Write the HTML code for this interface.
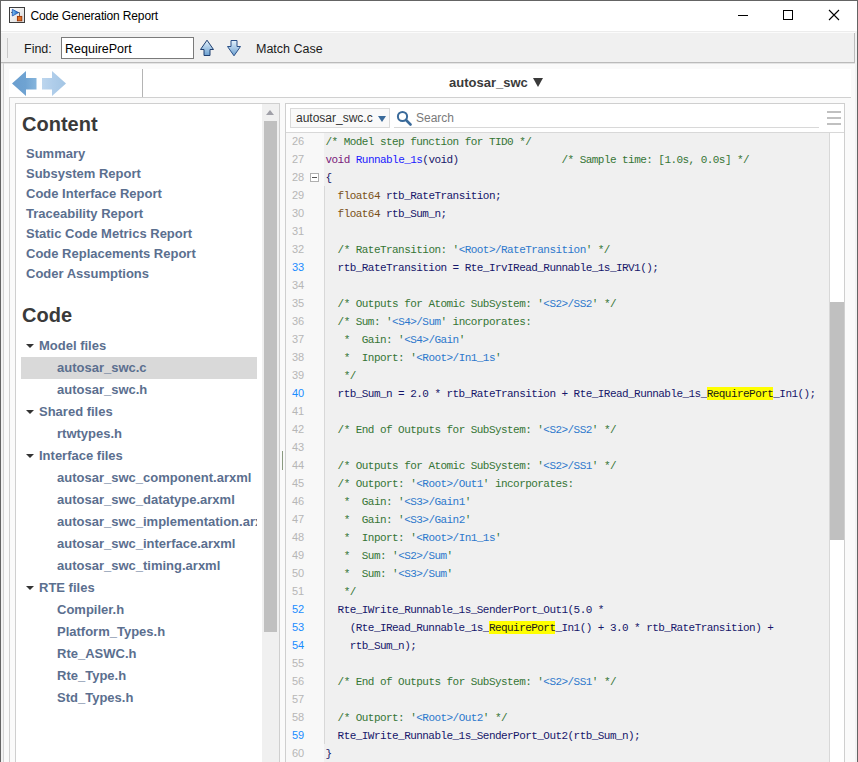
<!DOCTYPE html>
<html><head><meta charset="utf-8">
<style>
*{margin:0;padding:0;box-sizing:border-box}
html,body{width:858px;height:762px;overflow:hidden;background:#fff}
body{position:relative;font-family:"Liberation Sans",sans-serif}
.a{position:absolute}
.ttl{position:absolute;left:30.5px;top:9px;font-size:12px;letter-spacing:-0.15px;line-height:15px;color:#000;white-space:nowrap}
.tb{font-size:12.5px;line-height:15px;color:#1a1a1a;position:absolute;white-space:nowrap}
.nv{position:absolute;font-size:13px;font-weight:bold;line-height:16px;color:#5b6f8f;white-space:nowrap}
.tri{position:absolute;width:0;height:0;border-left:4px solid transparent;border-right:4px solid transparent;border-top:4px solid #333}
.ln{position:absolute;left:286px;width:37px;padding-left:6px;height:18px;line-height:18px;font-size:11px;color:#b6b6b6}
.ln.b{color:#1a8cff}
.cl{position:absolute;left:325.5px;height:18px;line-height:20px;padding-top:0px;font-family:"Liberation Mono",monospace;font-size:11px;letter-spacing:-0.55px;color:#16166a;white-space:pre;top:0}
.cl .c{color:#357535}
.cl .p{color:#2d78cc}
.cl .k{color:#7a1a7a}
.cl .f{color:#1a1aff}
.cl .t{color:#7a5018}
.cl .h{background:#ffff00;color:#1a1a1a;padding-top:1px}
</style></head><body>
<!-- window border -->
<div class="a" style="left:0;top:0;width:858px;height:1px;background:#646464"></div>
<div class="a" style="left:0;top:0;width:1px;height:762px;background:#646464"></div>
<div class="a" style="left:857px;top:0;width:1px;height:762px;background:#646464"></div>

<!-- title icon -->
<svg class="a" style="left:9px;top:7px" width="16" height="16" viewBox="0 0 16 16">
<defs><linearGradient id="ig" x1="0" y1="0" x2="1" y2="1"><stop offset="0" stop-color="#ffffff"/><stop offset="1" stop-color="#d8d8d8"/></linearGradient>
<linearGradient id="tg" x1="0" y1="0" x2="1" y2="0"><stop offset="0" stop-color="#7fc0f0"/><stop offset="1" stop-color="#1060c0"/></linearGradient></defs>
<rect x="0.5" y="0.5" width="15" height="15" fill="url(#ig)" stroke="#3c3c3c"/>
<path d="M2 5.5H10.5V9.5" fill="none" stroke="#666" stroke-width="1"/>
<path d="M3.3 2.3L9.5 5.6L3.3 9Z" fill="url(#tg)" stroke="#1a50b0" stroke-width="0.8"/>
<rect x="8.4" y="9.4" width="4.4" height="4.4" fill="#e07020" stroke="#9a3000" stroke-width="0.9"/>
</svg>
<div class="ttl">Code Generation Report</div>
<!-- window controls -->
<div class="a" style="left:738px;top:15px;width:10px;height:1px;background:#000"></div>
<div class="a" style="left:783px;top:10px;width:10px;height:10px;border:1px solid #000"></div>
<svg class="a" style="left:828px;top:9px" width="12" height="12" viewBox="0 0 12 12"><path d="M1 1L11 11M11 1L1 11" stroke="#000" stroke-width="1.1"/></svg>

<!-- toolbar -->
<div class="a" style="left:1px;top:31px;width:856px;height:1px;background:#ececec"></div>
<div class="a" style="left:1px;top:32px;width:854px;height:1px;background:#fbfbfb"></div>
<div class="a" style="left:1px;top:33px;width:854px;height:29px;background:#f0f0f0"></div>
<div class="a" style="left:1px;top:62px;width:854px;height:1px;background:#bababa"></div>
<div class="a" style="left:1px;top:63px;width:854px;height:1px;background:#e4e4e4"></div>
<div class="a" style="left:855px;top:31px;width:2px;height:731px;background:#f2f2f2"></div>
<div class="a" style="left:1px;top:64px;width:2px;height:698px;background:#f2f2f2"></div>
<div class="a" style="left:854px;top:33px;width:1px;height:30px;background:#bcbcbc"></div>
<div class="a" style="left:7px;top:38px;width:1px;height:20px;background:#c8c8c8"></div>
<div class="tb" style="left:24px;top:42px">Find:</div>
<div class="a" style="left:61px;top:37px;width:133px;height:22px;background:#fff;border:1px solid #7a7a7a"></div>
<div class="tb" style="left:65px;top:42px;color:#000">RequirePort</div>
<svg class="a" style="left:199px;top:39px" width="16" height="18" viewBox="0 0 16 18">
<defs><linearGradient id="ag" x1="0" y1="0" x2="0" y2="1"><stop offset="0" stop-color="#e4f2fc"/><stop offset="1" stop-color="#6a9fd0"/></linearGradient></defs>
<path d="M8 1.2L14.5 10.5H11V16.5H5V10.5H1.5Z" fill="url(#ag)" stroke="#1f3f70" stroke-width="1" stroke-linejoin="miter"/>
</svg>
<svg class="a" style="left:226px;top:39px" width="16" height="18" viewBox="0 0 16 18">
<path d="M5 1.5H11V7.5H14.5L8 16.8L1.5 7.5H5Z" fill="url(#ag)" stroke="#2a5088" stroke-width="1" stroke-linejoin="miter"/>
</svg>
<div class="tb" style="left:256px;top:42px">Match Case</div>

<!-- outer content container -->
<div class="a" style="left:3px;top:64px;width:852px;height:698px;background:#fafafa"></div>
<div class="a" style="left:3px;top:63px;width:1px;height:699px;background:#d4d4d4"></div>

<!-- nav bar -->
<div class="a" style="left:9px;top:69px;width:842px;height:28px;background:#fff"></div>
<svg class="a" style="left:11px;top:70px" width="58" height="27" viewBox="0 0 58 27">
<defs><linearGradient id="la" x1="0" y1="0" x2="1" y2="0"><stop offset="0" stop-color="#6a9ecf"/><stop offset="0.55" stop-color="#6fa3d2"/><stop offset="1" stop-color="#86b5dc"/></linearGradient><linearGradient id="ra" x1="0" y1="0" x2="1" y2="0"><stop offset="0" stop-color="#bdd6ee"/><stop offset="0.45" stop-color="#afcdea"/><stop offset="1" stop-color="#a3c5e4"/></linearGradient></defs><path d="M1 13.5L15 1V8H25.5V19.5H15V26Z" fill="url(#la)"/>
<path d="M31 8H41V1L55 13.5L41 26V19.5H31Z" fill="url(#ra)"/>
</svg>
<div class="a" style="left:142px;top:69px;width:1px;height:28px;background:#b4b4b4"></div>
<div class="a" style="left:449px;top:75px;font-size:13px;font-weight:bold;line-height:16px;color:#3a3a3a;white-space:nowrap">autosar_swc</div>
<div class="a" style="left:533px;top:78px;width:0;height:0;border-left:5px solid transparent;border-right:5px solid transparent;border-top:9px solid #3a3a3a"></div>

<!-- lower container -->
<div class="a" style="left:9px;top:97px;width:842px;height:1px;background:#d0d0d0"></div>
<div class="a" style="left:9px;top:97px;width:1px;height:665px;background:#d0d0d0"></div>

<!-- left panel -->
<div class="a" style="left:15px;top:103px;width:265px;height:670px;background:#fff;border:1px solid #cfcfcf"></div>
<div class="a" style="left:262px;top:104px;width:17px;height:658px;background:#f0f0f0"></div>
<div class="a" style="left:266px;top:110px;width:0;height:0;border-left:4px solid transparent;border-right:4px solid transparent;border-bottom:5px solid #a0a0a8"></div>
<div class="a" style="left:264px;top:121px;width:13px;height:511px;background:#c0c0c0"></div>
<div class="a" style="left:282px;top:451px;width:1px;height:19px;background:#8a9a80"></div>

<div class="a" style="left:22px;top:113px;font-size:20px;font-weight:bold;line-height:23px;color:#3a3a3a">Content</div>
<div class="a" style="left:22px;top:304px;font-size:20px;font-weight:bold;line-height:23px;color:#3a3a3a">Code</div>
<div class="a" style="left:21px;top:357px;width:236px;height:22px;background:#d9d9d9"></div>
<div class="a" style="left:16px;top:104px;width:241px;height:658px;overflow:hidden"><div class="a" style="left:-16px;top:-104px;width:300px;height:800px">
<div class="nv" style="left:26px;top:146px">Summary</div>
<div class="nv" style="left:26px;top:166px">Subsystem Report</div>
<div class="nv" style="left:26px;top:186px">Code Interface Report</div>
<div class="nv" style="left:26px;top:206px">Traceability Report</div>
<div class="nv" style="left:26px;top:226px">Static Code Metrics Report</div>
<div class="nv" style="left:26px;top:246px">Code Replacements Report</div>
<div class="nv" style="left:26px;top:266px">Coder Assumptions</div>
<div class="tri" style="left:26px;top:344px"></div>
<div class="nv" style="left:39px;top:338px">Model files</div>
<div class="nv" style="left:57px;top:360px">autosar_swc.c</div>
<div class="nv" style="left:57px;top:382px">autosar_swc.h</div>
<div class="tri" style="left:26px;top:410px"></div>
<div class="nv" style="left:39px;top:404px">Shared files</div>
<div class="nv" style="left:57px;top:426px">rtwtypes.h</div>
<div class="tri" style="left:26px;top:454px"></div>
<div class="nv" style="left:39px;top:448px">Interface files</div>
<div class="nv" style="left:57px;top:470px">autosar_swc_component.arxml</div>
<div class="nv" style="left:57px;top:492px">autosar_swc_datatype.arxml</div>
<div class="nv" style="left:57px;top:514px">autosar_swc_implementation.arxml</div>
<div class="nv" style="left:57px;top:536px">autosar_swc_interface.arxml</div>
<div class="nv" style="left:57px;top:558px">autosar_swc_timing.arxml</div>
<div class="tri" style="left:26px;top:586px"></div>
<div class="nv" style="left:39px;top:580px">RTE files</div>
<div class="nv" style="left:57px;top:602px">Compiler.h</div>
<div class="nv" style="left:57px;top:624px">Platform_Types.h</div>
<div class="nv" style="left:57px;top:646px">Rte_ASWC.h</div>
<div class="nv" style="left:57px;top:668px">Rte_Type.h</div>
<div class="nv" style="left:57px;top:690px">Std_Types.h</div>
</div></div>

<!-- code panel -->
<div class="a" style="left:285px;top:103px;width:560px;height:670px;background:#fff;border:1px solid #cfcfcf"></div>
<div class="a" style="left:290px;top:108px;width:100px;height:20px;background:#f9f9f9;border:1px solid #dadada"></div>
<div class="tb" style="left:296px;top:111px;color:#333;font-size:12px">autosar_swc.c</div>
<div class="a" style="left:378px;top:116px;width:0;height:0;border-left:4px solid transparent;border-right:4px solid transparent;border-top:6px solid #3a6a9a"></div>
<svg class="a" style="left:396px;top:110px" width="16" height="16" viewBox="0 0 16 16"><circle cx="6.5" cy="6.5" r="4.6" fill="none" stroke="#3a6a9a" stroke-width="2"/><path d="M10 10L14.5 14.5" stroke="#3a6a9a" stroke-width="2.6" stroke-linecap="round"/></svg>
<div class="tb" style="left:416px;top:111px;color:#7a7a7a;font-size:12px">Search</div>
<div class="a" style="left:394px;top:127px;width:425px;height:1px;background:#d8d8d8"></div>
<div class="a" style="left:827px;top:111px;width:14px;height:2px;background:#c0c0c0"></div>
<div class="a" style="left:827px;top:117px;width:14px;height:2px;background:#c0c0c0"></div>
<div class="a" style="left:827px;top:123px;width:14px;height:2px;background:#c0c0c0"></div>
<div class="a" style="left:286px;top:132px;width:558px;height:1px;background:#d8d8d8"></div>
<div class="a" style="left:286px;top:133px;width:38px;height:629px;background:#f8f8f8"></div>
<div class="a" style="left:324px;top:133px;width:505px;height:629px;background:#f0f0f0"></div>
<div class="a" style="left:829px;top:133px;width:1px;height:629px;background:#d8d8d8"></div>
<div class="a" style="left:830px;top:133px;width:14px;height:629px;background:#fff"></div>
<div class="a" style="left:830px;top:302px;width:14px;height:238px;background:#c0c0c0"></div>
<div class="a" style="left:324px;top:186px;width:1px;height:558px;background:#d8d8d8"></div>
<div class="a" style="left:310px;top:173px;width:9px;height:9px;background:#fff;border:1px solid #b0b0b0"></div>
<div class="a" style="left:312px;top:177px;width:5px;height:1px;background:#555"></div>
<div class="ln" style="top:132px">26</div>
<div class="cl" style="top:132px"><span class="c">/* Model step function for TID0 */</span></div>
<div class="ln" style="top:150px">27</div>
<div class="cl" style="top:150px"><span class="k">void</span> <span class="f">Runnable_1s</span>(void)                 <span class="c">/* Sample time: [1.0s, 0.0s] */</span></div>
<div class="ln" style="top:168px">28</div>
<div class="cl" style="top:168px">{</div>
<div class="ln" style="top:186px">29</div>
<div class="cl" style="top:186px">  <span class="t">float64</span> rtb_RateTransition;</div>
<div class="ln" style="top:204px">30</div>
<div class="cl" style="top:204px">  <span class="t">float64</span> rtb_Sum_n;</div>
<div class="ln" style="top:222px">31</div>
<div class="ln" style="top:240px">32</div>
<div class="cl" style="top:240px">  <span class="c">/* RateTransition: &#x27;</span><span class="p">&lt;Root&gt;/RateTransition</span><span class="c">&#x27; */</span></div>
<div class="ln b" style="top:258px">33</div>
<div class="cl" style="top:258px">  rtb_RateTransition = Rte_IrvIRead_Runnable_1s_IRV1();</div>
<div class="ln" style="top:276px">34</div>
<div class="ln" style="top:294px">35</div>
<div class="cl" style="top:294px">  <span class="c">/* Outputs for Atomic SubSystem: &#x27;</span><span class="p">&lt;S2&gt;/SS2</span><span class="c">&#x27; */</span></div>
<div class="ln" style="top:312px">36</div>
<div class="cl" style="top:312px">  <span class="c">/* Sum: &#x27;</span><span class="p">&lt;S4&gt;/Sum</span><span class="c">&#x27; incorporates:</span></div>
<div class="ln" style="top:330px">37</div>
<div class="cl" style="top:330px">   <span class="c">*  Gain: &#x27;</span><span class="p">&lt;S4&gt;/Gain</span><span class="c">&#x27;</span></div>
<div class="ln" style="top:348px">38</div>
<div class="cl" style="top:348px">   <span class="c">*  Inport: &#x27;</span><span class="p">&lt;Root&gt;/In1_1s</span><span class="c">&#x27;</span></div>
<div class="ln" style="top:366px">39</div>
<div class="cl" style="top:366px">   <span class="c">*/</span></div>
<div class="ln b" style="top:384px">40</div>
<div class="cl" style="top:384px">  rtb_Sum_n = 2.0 * rtb_RateTransition + Rte_IRead_Runnable_1s_<span class="h">RequirePort</span>_In1();</div>
<div class="ln" style="top:402px">41</div>
<div class="ln" style="top:420px">42</div>
<div class="cl" style="top:420px">  <span class="c">/* End of Outputs for SubSystem: &#x27;</span><span class="p">&lt;S2&gt;/SS2</span><span class="c">&#x27; */</span></div>
<div class="ln" style="top:438px">43</div>
<div class="ln" style="top:456px">44</div>
<div class="cl" style="top:456px">  <span class="c">/* Outputs for Atomic SubSystem: &#x27;</span><span class="p">&lt;S2&gt;/SS1</span><span class="c">&#x27; */</span></div>
<div class="ln" style="top:474px">45</div>
<div class="cl" style="top:474px">  <span class="c">/* Outport: &#x27;</span><span class="p">&lt;Root&gt;/Out1</span><span class="c">&#x27; incorporates:</span></div>
<div class="ln" style="top:492px">46</div>
<div class="cl" style="top:492px">   <span class="c">*  Gain: &#x27;</span><span class="p">&lt;S3&gt;/Gain1</span><span class="c">&#x27;</span></div>
<div class="ln" style="top:510px">47</div>
<div class="cl" style="top:510px">   <span class="c">*  Gain: &#x27;</span><span class="p">&lt;S3&gt;/Gain2</span><span class="c">&#x27;</span></div>
<div class="ln" style="top:528px">48</div>
<div class="cl" style="top:528px">   <span class="c">*  Inport: &#x27;</span><span class="p">&lt;Root&gt;/In1_1s</span><span class="c">&#x27;</span></div>
<div class="ln" style="top:546px">49</div>
<div class="cl" style="top:546px">   <span class="c">*  Sum: &#x27;</span><span class="p">&lt;S2&gt;/Sum</span><span class="c">&#x27;</span></div>
<div class="ln" style="top:564px">50</div>
<div class="cl" style="top:564px">   <span class="c">*  Sum: &#x27;</span><span class="p">&lt;S3&gt;/Sum</span><span class="c">&#x27;</span></div>
<div class="ln" style="top:582px">51</div>
<div class="cl" style="top:582px">   <span class="c">*/</span></div>
<div class="ln b" style="top:600px">52</div>
<div class="cl" style="top:600px">  Rte_IWrite_Runnable_1s_SenderPort_Out1(5.0 *</div>
<div class="ln b" style="top:618px">53</div>
<div class="cl" style="top:618px">    (Rte_IRead_Runnable_1s_<span class="h">RequirePort</span>_In1() + 3.0 * rtb_RateTransition) +</div>
<div class="ln b" style="top:636px">54</div>
<div class="cl" style="top:636px">    rtb_Sum_n);</div>
<div class="ln" style="top:654px">55</div>
<div class="ln" style="top:672px">56</div>
<div class="cl" style="top:672px">  <span class="c">/* End of Outputs for SubSystem: &#x27;</span><span class="p">&lt;S2&gt;/SS1</span><span class="c">&#x27; */</span></div>
<div class="ln" style="top:690px">57</div>
<div class="ln" style="top:708px">58</div>
<div class="cl" style="top:708px">  <span class="c">/* Outport: &#x27;</span><span class="p">&lt;Root&gt;/Out2</span><span class="c">&#x27; */</span></div>
<div class="ln b" style="top:726px">59</div>
<div class="cl" style="top:726px">  Rte_IWrite_Runnable_1s_SenderPort_Out2(rtb_Sum_n);</div>
<div class="ln" style="top:744px">60</div>
<div class="cl" style="top:744px">}</div>
</body></html>
